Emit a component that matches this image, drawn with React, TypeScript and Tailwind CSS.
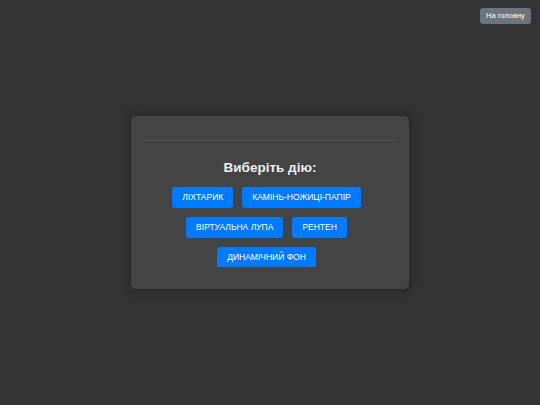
const actions = ["Ліхтарик", "Камінь-ножиці-папір", "Віртуальна лупа", "Рентен", "Динамічний фон"];

const App = () => {
  return (
    <div
      className="relative flex h-[405px] w-full items-center justify-center bg-[#333333]"
      style={{ fontFamily: '"Liberation Sans", Arial, sans-serif' }}
    >
      <button className="absolute right-[9px] top-[8px] h-4 w-[51px] rounded-[3px] bg-[#6c757d] text-[7.5px] leading-none text-white">
        На головну
      </button>

      <div className="flex h-[173px] w-[278px] flex-col rounded-[5px] bg-[#444444] px-3 shadow-[0_0_8px_rgba(0,0,0,0.45)]">
        <div className="h-[25px] shrink-0 border-b border-[#505050]" />
        <div className="h-[126px] overflow-hidden">
          <h2 className="mt-[17px] text-center text-[13.5px] font-bold leading-5 text-[#eeeeee]">Виберіть дію:</h2>
          <div className="mt-[9px] flex flex-wrap justify-center gap-[9px] pr-[7px]">
            {actions.map((a) => (
              <button
                key={a}
                className="h-[21px] rounded-[3px] bg-[#007bff] px-[10px] text-[8.5px] uppercase leading-none text-white"
              >
                {a}
              </button>
            ))}
          </div>
        </div>
      </div>
    </div>
  );
};

export default App;
